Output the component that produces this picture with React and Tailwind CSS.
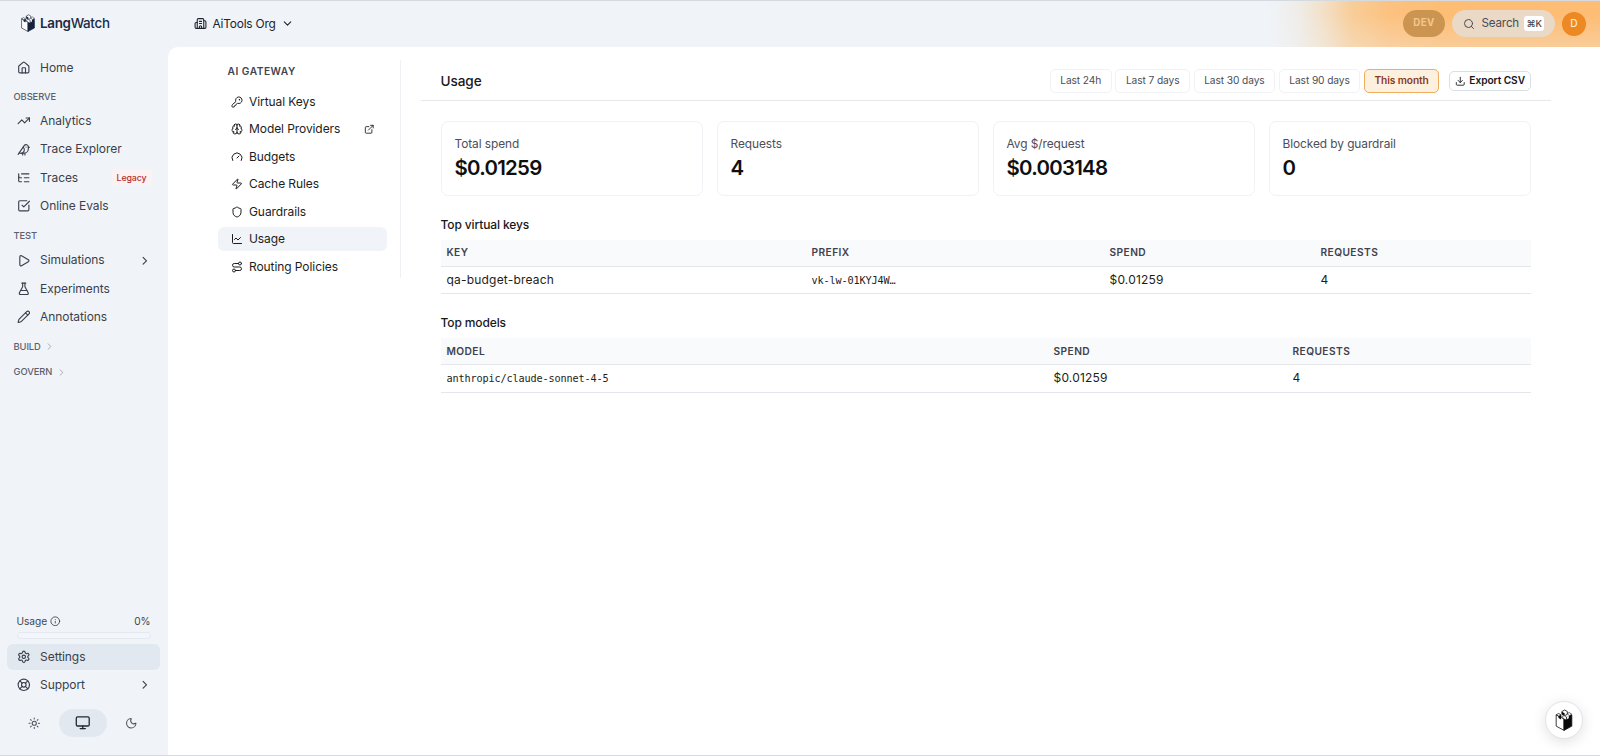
import React, { useState } from 'react';
import {
  Bird, Brain, Building2, ChartLine, ChevronDown, ChevronRight, Download, ExternalLink, FlaskConical, Gauge,
  House, Info, KeyRound, LifeBuoy, ListTree, Monitor, Moon, Pencil, Play, Route, Search, Settings, Shield,
  SquareCheckBig, Sun, TrendingUp, Zap,
} from 'lucide-react';

const observeItems = [
  { name: 'Analytics', icon: TrendingUp },
  { name: 'Trace Explorer', icon: Bird },
  { name: 'Traces', icon: ListTree, badge: 'Legacy' },
  { name: 'Online Evals', icon: SquareCheckBig },
];

const testItems = [
  { name: 'Simulations', icon: Play, expandable: true },
  { name: 'Experiments', icon: FlaskConical },
  { name: 'Annotations', icon: Pencil },
];

const gatewayItems = [
  { name: 'Virtual Keys', icon: KeyRound },
  { name: 'Model Providers', icon: Brain, external: true },
  { name: 'Budgets', icon: Gauge },
  { name: 'Cache Rules', icon: Zap },
  { name: 'Guardrails', icon: Shield },
  { name: 'Usage', icon: ChartLine },
  { name: 'Routing Policies', icon: Route },
];

const ranges = ['Last 24h', 'Last 7 days', 'Last 30 days', 'Last 90 days', 'This month'];

const stats = [
  { label: 'Total spend', value: '$0.01259' },
  { label: 'Requests', value: '4' },
  { label: 'Avg $/request', value: '$0.003148' },
  { label: 'Blocked by guardrail', value: '0' },
];

const LogoMark = ({ className, dark = '#16233b' }) => (
  <svg viewBox="0 0 28 36" className={className} fill="none">
    <path d="M1.2 9.5 14 16.5V35L1.2 28Z" fill="#fff" stroke={dark} strokeWidth="1.3" strokeLinejoin="round" />
    <path d="M14 16.5 26.8 9.5V28L14 35Z" fill={dark} stroke={dark} strokeWidth="1.3" strokeLinejoin="round" />
    {/* battlements */}
    <path d="M1.2 9.5 5 7.4 9 9.5V13.8Z" fill="#fff" stroke={dark} strokeWidth="1.2" strokeLinejoin="round" />
    <path d="M5 11.6 9 9.4V17L5 14.6Z" fill={dark} />
    <path d="M10.5 4.2 15 1.6 19.5 4.2V8.6L15 11 10.5 8.6Z" fill="#fff" stroke={dark} strokeWidth="1.3" strokeLinejoin="round" />
    <path d="M10.5 4.4 15 6.8V11L10.5 8.6Z" fill={dark} />
    <path d="M19.5 7.4 22.5 5.8 26.6 8.4 22.5 11Z" fill="#fff" stroke={dark} strokeWidth="1" strokeLinejoin="round" />
    <path d="M10.5 12.5 14.2 10.8 18 13V18.2L14.2 16.5Z" fill="#fff" stroke={dark} strokeWidth="1" strokeLinejoin="round" />
    <path d="M19 12.5 21.8 11V15.2L19 16.8Z" fill="#fff" />
  </svg>
);

const NavItem = ({ item, active }) => {
  const Icon = item.icon;
  return (
    <a className={`flex h-[26px] items-center rounded-md pl-[9.5px] pr-[8.5px] text-[12px] tracking-[-0.08px] text-[#3a3f4b] ${active ? 'bg-[#e1e8f0]' : ''}`}>
      <Icon className="mr-[10px] size-[13.6px] shrink-0" />
      <span className="flex-1 whitespace-nowrap">{item.name}</span>
      {item.badge && (
        <span className="rounded bg-[#fdf2f2] px-[5px] py-[2px] text-[8.8px] font-medium leading-[13px] tracking-[-0.1px] text-[#b32f2f]">{item.badge}</span>
      )}
      {item.expandable && <ChevronRight className="size-[13.6px]" />}
    </a>
  );
};

const SectionLabel = ({ children, className, collapsed }) => (
  <div className={`flex h-[13px] items-center gap-[3.5px] pl-[6.5px] text-[9.4px] font-medium tracking-[-0.1px] text-[#5b606d] ${className}`}>
    {children}
    {collapsed && <ChevronRight className="size-[11px] text-[#a0a5b0]" />}
  </div>
);

const Sidebar = () => (
  <aside className="flex w-[168px] shrink-0 flex-col pb-[18px] pl-[7px] pr-[8px] pt-[7.5px]">
    <NavItem item={{ name: 'Home', icon: House }} />
    <SectionLabel className="mb-[4.5px] mt-[10px]">OBSERVE</SectionLabel>
    <nav className="flex flex-col gap-[2.3px]">
      {observeItems.map((item) => <NavItem key={item.name} item={item} />)}
    </nav>
    <SectionLabel className="mb-[4.5px] mt-[11px]">TEST</SectionLabel>
    <nav className="flex flex-col gap-[2.4px]">
      {testItems.map((item) => <NavItem key={item.name} item={item} />)}
    </nav>
    <SectionLabel className="mt-[10px]" collapsed>BUILD</SectionLabel>
    <SectionLabel className="mt-[12.7px]" collapsed>GOVERN</SectionLabel>

    {/* Plan usage */}
    <div className="mt-auto px-[9.5px]">
      <div className="flex h-[15px] items-center text-[10.2px] tracking-[-0.05px] text-[#3f4450]">
        <span>Usage</span>
        <Info className="ml-[3px] size-[10.5px]" />
        <span className="ml-auto">0%</span>
      </div>
      <div className="mb-[5px] mt-[3.5px] h-[6.5px] rounded-[3px] border border-[#e5e9ef] bg-[#f2f5f9]" />
    </div>
    <div className="flex flex-col gap-[2.3px]">
      <NavItem item={{ name: 'Settings', icon: Settings }} active />
      <NavItem item={{ name: 'Support', icon: LifeBuoy, expandable: true }} />
    </div>

    {/* Theme switch */}
    <div className="mt-[11px] flex h-[28px] items-center pl-[2px] pr-[4px] text-[#4b505c]">
      <button className="flex h-full flex-1 items-center justify-center"><Sun className="size-[12.5px]" /></button>
      <button className="flex h-full w-[48px] items-center justify-center rounded-full bg-[#e1e8f0] text-[#23272f]">
        <Monitor className="size-[15.5px]" />
      </button>
      <button className="flex h-full flex-1 items-center justify-center"><Moon className="size-[12.5px]" /></button>
    </div>
  </aside>
);

const Header = () => (
  <header className="flex h-[47px] shrink-0 items-center border-t border-[#d5d9e0] bg-[linear-gradient(to_bottom,transparent_30%,rgba(240,244,249,0.28)),linear-gradient(to_right,#f0f4f9_1265px,#efede9_1298px,#f3dfc6_1325px,#f8cd99_1352px,#fcc280_1388px,#fdbd74_1440px,#fdbd74_1600px)] pb-px pr-[14px]">
    <div className="flex w-[167px] items-center pl-[21px]">
      <LogoMark className="h-[18px] w-[14px]" />
      <span className="ml-[5px] text-[13.4px] font-semibold tracking-[-0.3px] text-[#1c2a44]">Lang<span className="font-medium">Watch</span></span>
    </div>
    <button className="flex items-center pl-[26.5px] text-[11.9px] tracking-[-0.2px] text-[#20242c]">
      <Building2 className="mr-[6px] size-[13px]" />
      AiTools Org
      <ChevronDown className="ml-[5px] size-[13px]" />
    </button>
    <div className="ml-auto flex items-center">
      <span className="flex h-[27px] w-[42px] items-center justify-center rounded-full bg-[#cb9551] text-[9.8px] font-bold tracking-[0.4px] text-[#f3c68c]">DEV</span>
      <button className="ml-[7px] flex h-[27px] w-[103px] items-center rounded-full bg-[#e9d9c6] pl-[10.5px] text-[11.6px] tracking-[-0.15px] text-[#4a4c55]">
        <Search className="mr-[7px] size-[12px] shrink-0" />
        Search
        <span className="ml-auto mr-[11px] w-5 rounded-[3px] bg-white text-center text-[9.4px] font-medium leading-[15px] tracking-[-0.4px] text-[#3f4450]">⌘K</span>
      </button>
      <span className="ml-[7px] flex size-[24px] items-center justify-center rounded-full bg-[#ed8822] text-[10.2px] font-medium text-[#fdebd3]">D</span>
    </div>
  </header>
);

const GatewayMenu = () => (
  <div className="mt-[13px] flex h-[218px] w-[183px] shrink-0 flex-col border-r border-[#eff1f4] pr-[13px]">
    <h2 className="mb-[10.5px] mt-[4px] pl-[9.5px] text-[10.2px] font-semibold leading-[15px] tracking-[0.5px] text-[#42444f]">AI GATEWAY</h2>
    <nav className="flex flex-col gap-[3.5px]">
      {gatewayItems.map(({ name, icon: Icon, external }) => (
        <a
          key={name}
          className={`flex h-6 items-center rounded-md pl-[13px] pr-[13px] text-[12px] tracking-[-0.08px] text-[#1d1d20] ${
            name === 'Usage' ? 'bg-[#f0f4f9]' : ''
          }`}
        >
          <Icon className="mr-[6px] size-[12px] shrink-0" />
          <span className="flex-1 whitespace-nowrap">{name}</span>
          {external && <ExternalLink className="size-[10.5px]" />}
        </a>
      ))}
    </nav>
  </div>
);

const DataTable = ({ title, columns, template, rows, className }) => (
  <section className={className}>
    <h3 className="mb-[7px] text-[12px] font-medium leading-[17px] tracking-[-0.12px] text-[#18181b]">{title}</h3>
    <div className={`grid h-[27px] items-center border-b border-[#e3e6eb] bg-[#f8fafc] pl-[6px] text-[10.2px] font-semibold tracking-[0.42px] text-[#3f424e] ${template}`}>
      {columns.map((col) => <span key={col}>{col}</span>)}
    </div>
    {rows.map((row) => (
      <div key={row[0].text} className={`grid h-[27.3px] items-center border-b border-[#e3e6eb] pl-[6px] text-[12px] tracking-[0.2px] text-[#1d1d20] ${template}`}>
        {row.map((cell) => (
          <span key={cell.text} className={cell.mono ? "font-['DejaVu_Sans_Mono',monospace] text-[10.2px] tracking-[-0.13px]" : ''}>{cell.text}</span>
        ))}
      </div>
    ))}
  </section>
);

const UsagePage = () => {
  const [range, setRange] = useState('This month');

  return (
    <main className="ml-[20px] mr-[49px] flex-1">
      <div className="flex h-[53.5px] items-center border-b border-[#e6e8ec] pl-[19.5px] pr-[20px] pt-[15.5px]">
        <h1 className="text-[13.6px] font-medium tracking-[-0.1px] text-[#18181b]">Usage</h1>
        <div className="ml-auto flex gap-[3.4px]">
          {ranges.map((name) => (
            <button
              key={name}
              onClick={() => setRange(name)}
              className={`h-6 whitespace-nowrap rounded-[5px] border px-[9.7px] text-[10.2px] tracking-[-0.1px] ${
                name === range ? 'border-[#efae5e] bg-[#fdf0df] font-semibold text-[#8a3b1c]' : 'border-[#f1f2f5] text-[#4a4d58]'
              }`}
            >
              {name}
            </button>
          ))}
        </div>
        <button className="ml-[10px] flex h-5 items-center whitespace-nowrap rounded-[5px] border border-[#d9dfe8] px-[5px] text-[10.2px] font-semibold tracking-[-0.08px] text-[#18181b]">
          <Download className="mr-[3.4px] size-[10.5px]" />
          Export CSV
        </button>
      </div>

      <div className="pl-[19.5px] pr-[20px] pt-[20.5px]">
        <div className="grid grid-cols-4 gap-[13.6px]">
          {stats.map((stat) => (
            <div key={stat.label} className="h-[74.5px] rounded-[7px] border border-[#f1f2f5] px-[13px] pt-[13px]">
              <p className="text-[11.9px] leading-[17px] tracking-[-0.08px] text-[#4c4e5a]">{stat.label}</p>
              <p className="mt-[1px] text-[20.4px] font-semibold leading-[29px] tracking-[-0.72px] text-[#0f0f11]">{stat.value}</p>
            </div>
          ))}
        </div>

        <DataTable
          className="mt-[20.5px]"
          title="Top virtual keys"
          template="grid-cols-[365px_298px_211px_1fr]"
          columns={['KEY', 'PREFIX', 'SPEND', 'REQUESTS']}
          rows={[[{ text: 'qa-budget-breach' }, { text: 'vk-lw-01KYJ4W…', mono: true }, { text: '$0.01259' }, { text: '4' }]]}
        />
        <DataTable
          className="mt-[20px]"
          title="Top models"
          template="grid-cols-[607px_239px_1fr]"
          columns={['MODEL', 'SPEND', 'REQUESTS']}
          rows={[[{ text: 'anthropic/claude-sonnet-4-5', mono: true }, { text: '$0.01259' }, { text: '4' }]]}
        />
      </div>
    </main>
  );
};

const App = () => (
  <div className="flex h-screen flex-col overflow-hidden border-b border-[#d5d9e0] bg-[#f0f4f9] font-['Inter','Liberation_Sans',sans-serif]">
    <Header />
    <div className="flex min-h-0 flex-1">
      <Sidebar />
      <div className="flex flex-1 items-start rounded-tl-[10px] bg-white pl-[50px]">
        <GatewayMenu />
        <UsagePage />
      </div>
    </div>
    <button className="fixed bottom-[17px] right-[17px] flex size-[38px] items-center justify-center rounded-full border border-[#e0e3ea] bg-white shadow-[0_3px_14px_rgba(0,0,0,0.12)]">
      <LogoMark className="h-[22px] w-[18px]" dark="#0a0a0a" />
    </button>
  </div>
);

export default App;
